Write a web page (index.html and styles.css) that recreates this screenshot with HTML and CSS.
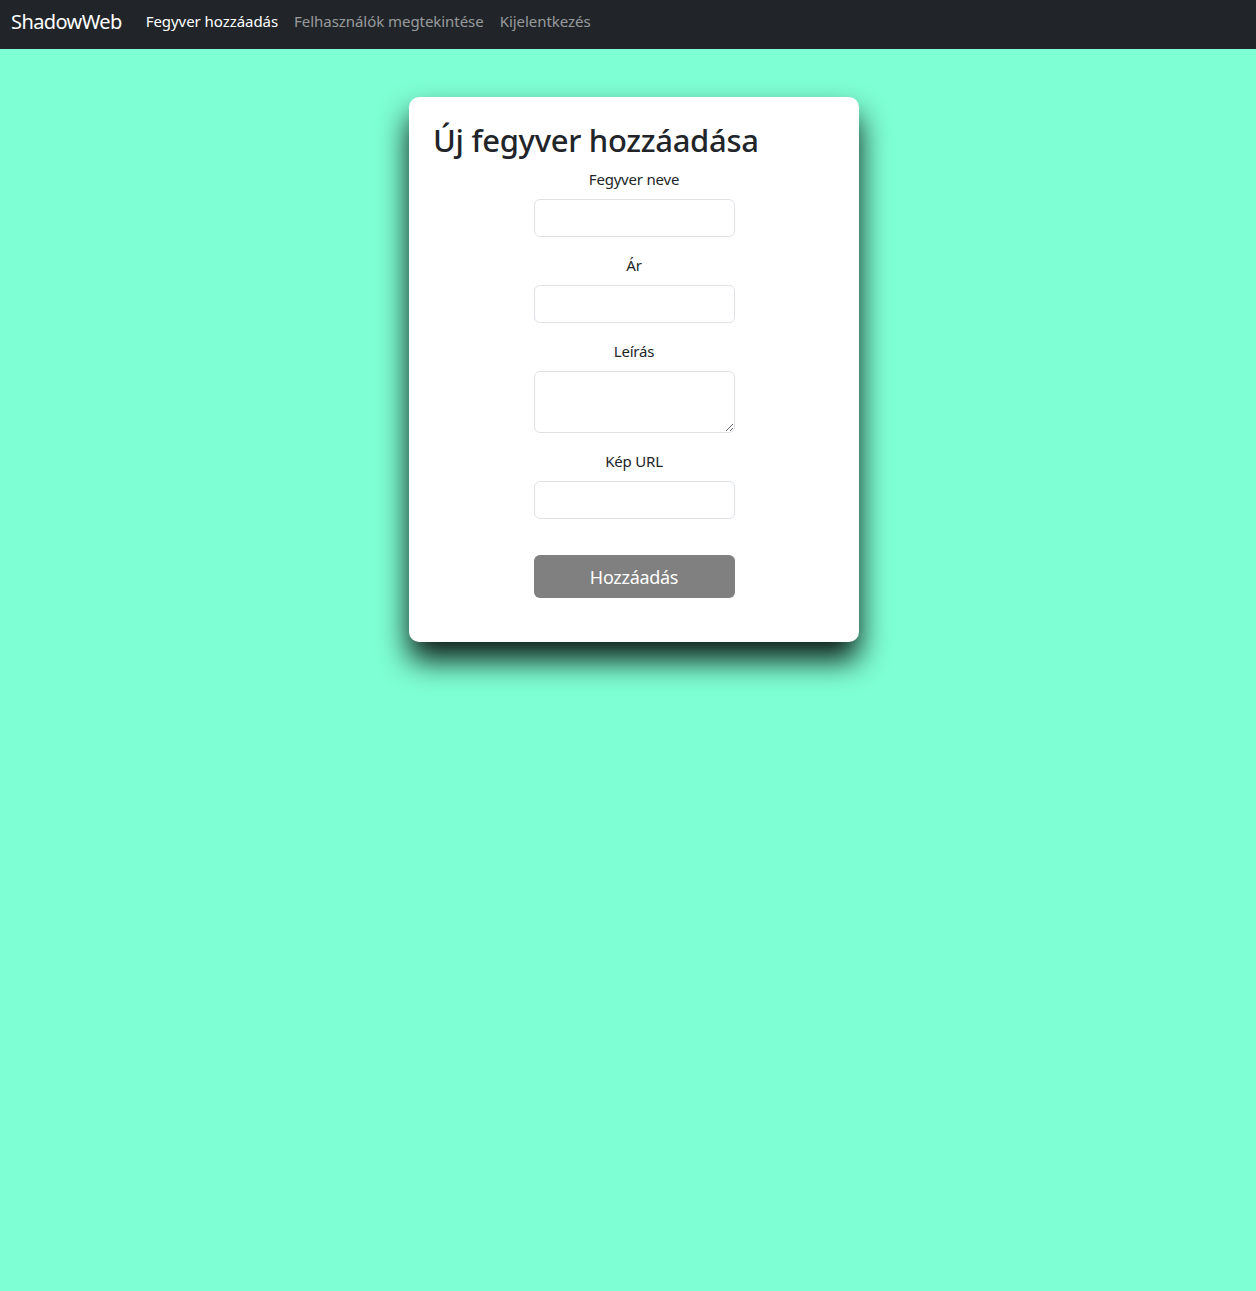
FILE: index.html
```html
<!DOCTYPE html>
<html lang="hu">
<head>
<meta charset="utf-8">
<title>ShadowWeb</title>
<link rel="stylesheet" href="styles.css">
</head>
<body>
<nav class="navbar">
  <a class="brand" href="#">ShadowWeb</a>
  <ul class="nav">
    <li><a class="nav-link active" href="#">Fegyver hozzáadás</a></li>
    <li><a class="nav-link" href="#">Felhasználók megtekintése</a></li>
    <li><a class="nav-link" href="#">Kijelentkezés</a></li>
  </ul>
</nav>
<main class="page">
  <div class="card">
    <h2 class="title">Új fegyver hozzáadása</h2>
    <form class="form">
      <div class="group">
        <label class="label">Fegyver neve</label>
        <input class="control" type="text">
      </div>
      <div class="group">
        <label class="label">Ár</label>
        <input class="control" type="text">
      </div>
      <div class="group">
        <label class="label">Leírás</label>
        <textarea class="control area"></textarea>
      </div>
      <div class="group">
        <label class="label">Kép URL</label>
        <input class="control" type="text">
      </div>
      <button class="btn" type="button">Hozzáadás</button>
    </form>
  </div>
</main>
</body>
</html>
```
FILE: styles.css
```css
* { box-sizing: border-box; }
html, body { margin: 0; padding: 0; }
body {
  background: #7fffd4;
  font-family: "Noto Sans", "Open Sans", sans-serif;
  color: #212529;
  font-size: 16px;
  line-height: 1.5;
  min-height: 1291px;
}
.navbar {
  background: #212529;
  height: 49px;
  display: flex;
  align-items: center;
  padding: 0 11px 6px;
}
.brand {
  color: #fff;
  text-decoration: none;
  font-size: 20px;
  margin-right: 16px;
  letter-spacing: -0.6px;
}
.nav {
  list-style: none;
  margin: 0;
  padding: 0;
  display: flex;
}
.nav-link {
  display: block;
  padding: 0 8px;
  color: rgba(255,255,255,0.55);
  text-decoration: none;
  font-size: 15px;
  letter-spacing: -0.05px;
}
.nav-link.active { color: #fff; }
.page {
  display: flex;
  justify-content: center;
  padding-top: 48px;
  padding-left: 12px;
}
.card {
  width: 450px;
  background: #fff;
  border-radius: 10px;
  padding: 24px 24px 44px;
  box-shadow: 0 18px 30px rgba(0,0,0,0.9);
}
.title {
  margin: 0 0 8px 0;
  font-size: 31px;
  font-weight: 500;
  line-height: 38px;
  letter-spacing: -0.3px;
}
.form {
  display: flex;
  flex-direction: column;
  align-items: center;
}
.group {
  display: flex;
  flex-direction: column;
  align-items: center;
  margin-bottom: 16px;
}
.label {
  font-size: 15px;
  line-height: 24px;
  margin-bottom: 8px;
  letter-spacing: -0.2px;
}
.control {
  width: 201px;
  height: 38px;
  border: 1px solid #dee2e6;
  border-radius: 6px;
  background: #fff;
  font: inherit;
  padding: 6px 12px;
}
.area {
  height: 62px;
  resize: vertical;
  display: block;
}
.btn {
  margin-top: 20px;
  width: 201px;
  height: 43px;
  background: #808080;
  color: #fff;
  border: none;
  border-radius: 6px;
  font-family: inherit;
  font-size: 18px;
  letter-spacing: -0.3px;
}
```
